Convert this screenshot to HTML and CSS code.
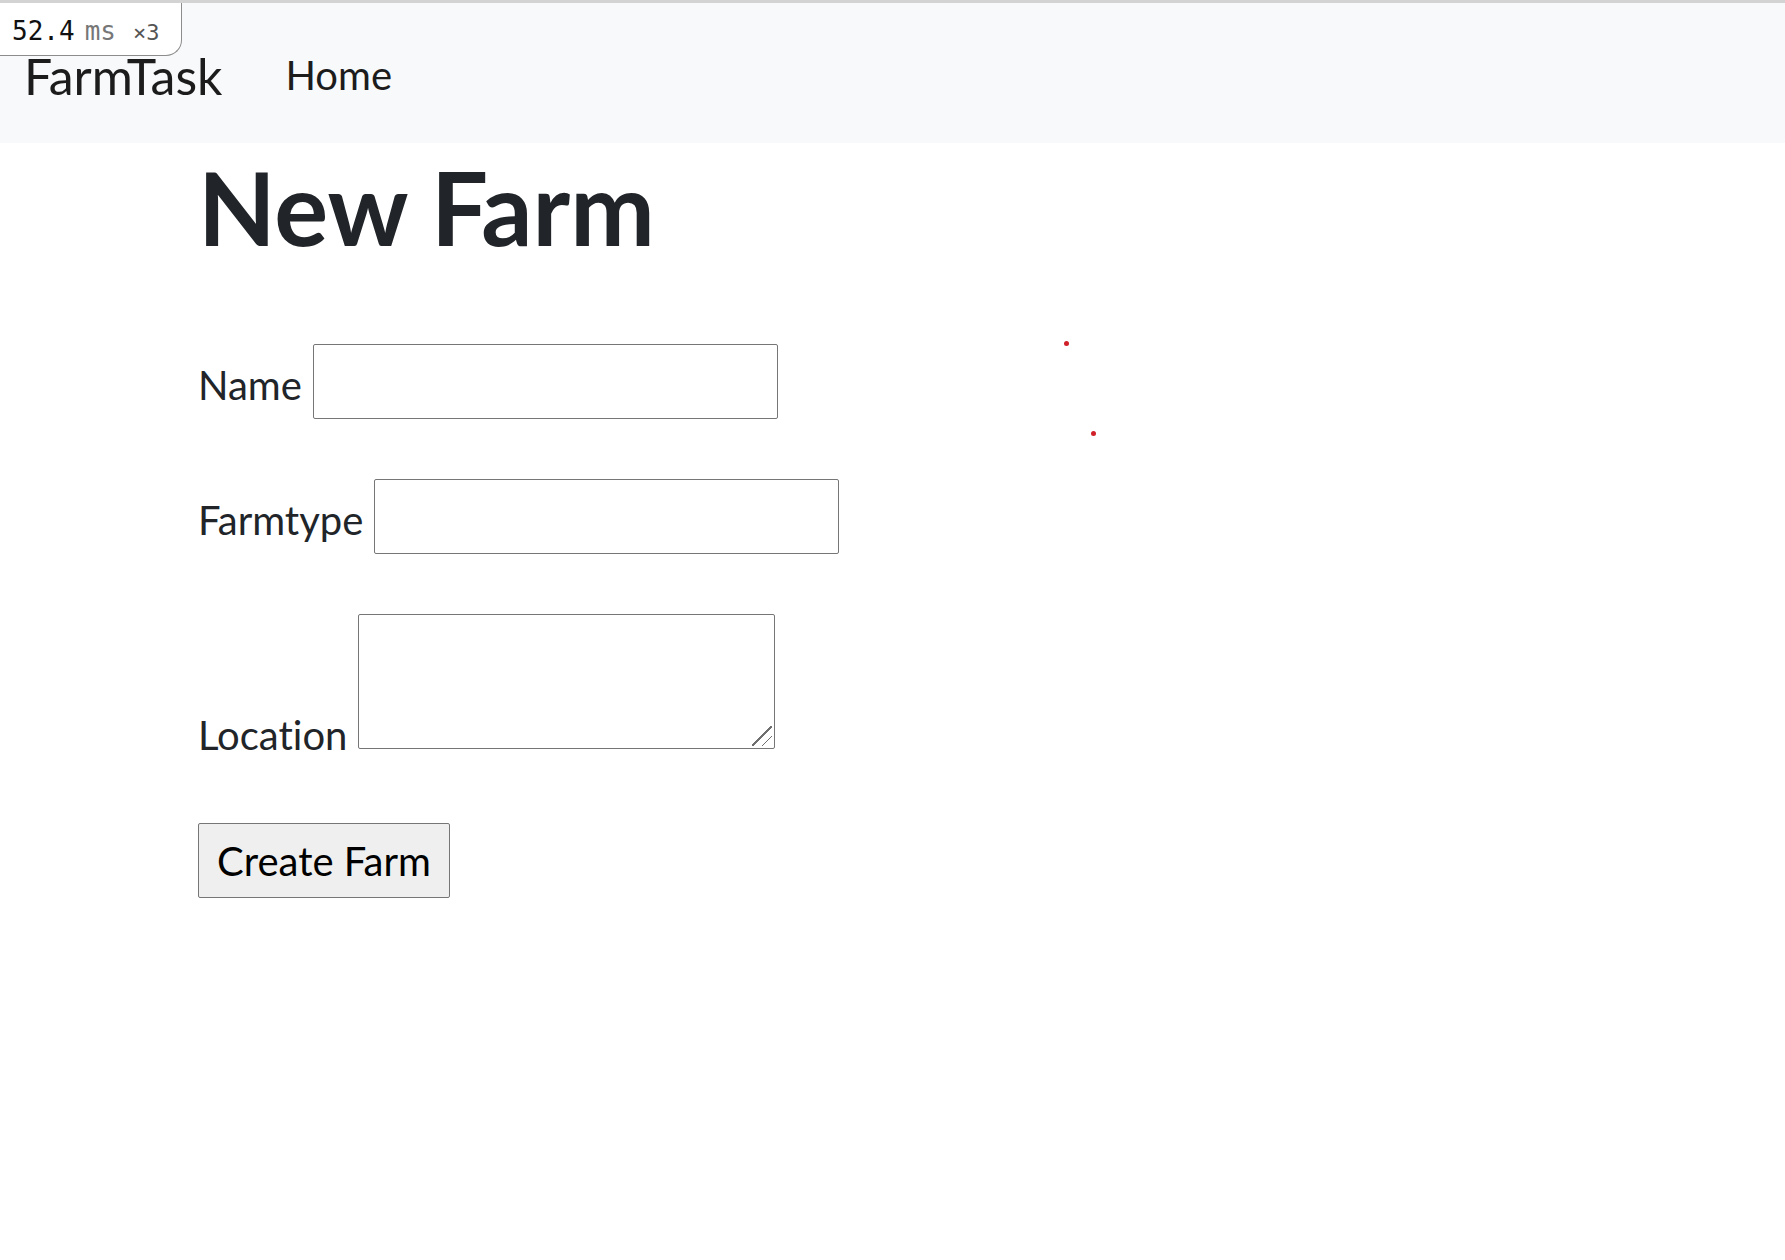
FILE: index.html
```html
<!DOCTYPE html>
<html lang="en">
<head>
<meta charset="utf-8">
<title>FarmTask</title>
<link rel="stylesheet" href="styles.css">
</head>
<body>
<div class="topline"></div>
<nav class="navbar">
  <a class="brand" href="#">FarmTask</a>
  <a class="nav-link" href="#">Home</a>
</nav>
<div class="perf"><span class="perf-num">52.4</span><span class="perf-unit">ms</span><span class="perf-count">×3</span></div>
<main class="container">
  <h1 class="title">New Farm</h1>
  <form class="farm-form">
    <div class="field field-input">
      <label class="label" for="name">Name</label>
      <input class="text-input" type="text" id="name">
    </div>
    <div class="field field-input">
      <label class="label" for="farmtype">Farmtype</label>
      <input class="text-input" type="text" id="farmtype">
    </div>
    <div class="field field-area">
      <label class="label" for="location">Location</label>
      <span class="area-wrap"><textarea class="text-area" id="location"></textarea></span>
    </div>
    <div class="actions">
      <button class="btn" type="button">Create Farm</button>
    </div>
  </form>
</main>
<span class="dot dot-a"></span>
<span class="dot dot-b"></span>
</body>
</html>
```

FILE: styles.css
```css
html, body {
  margin: 0;
  padding: 0;
  background: #ffffff;
}

body {
  font-family: "Lato", "Noto Sans", sans-serif;
  font-variant-ligatures: none;
  color: #212529;
  position: relative;
  min-height: 1260px;
}

.topline {
  height: 3px;
  background: #d3d3d3;
}

.navbar {
  height: 140px;
  background: #f8f9fa;
  display: flex;
  align-items: flex-start;
  padding-left: 24px;
  box-sizing: border-box;
}

.brand {
  font-size: 50px;
  line-height: 60px;
  margin-top: 43px;
  color: #1c1c1c;
  text-decoration: none;
}

.nav-link {
  font-size: 40px;
  line-height: 48px;
  margin-top: 48px;
  margin-left: 63px;
  color: #1c1c1c;
  text-decoration: none;
}

.perf {
  position: absolute;
  top: 3px;
  left: -1px;
  width: 183px;
  height: 53px;
  box-sizing: border-box;
  background: #ffffff;
  border: 1px solid #8c8c8c;
  border-top: none;
  border-bottom-right-radius: 16px;
  font-family: "DejaVu Sans Mono", "Liberation Mono", monospace;
  display: flex;
  align-items: baseline;
  padding: 13px 0 0 12px;
  line-height: 30px;
}

.perf-num {
  font-size: 26px;
  color: #111111;
}

.perf-unit {
  font-size: 26px;
  color: #777777;
  margin-left: 10px;
}

.perf-count {
  font-size: 22px;
  color: #555555;
  margin-left: 17px;
}

.container {
  padding-left: 198px;
}

.title {
  font-size: 101px;
  font-weight: 700;
  line-height: 120px;
  margin: 4px 0 77px;
  color: #212529;
  letter-spacing: 0;
}

.farm-form {
  display: flex;
  flex-direction: column;
  align-items: flex-start;
}

.field {
  display: flex;
  align-items: flex-end;
  gap: 11px;
  margin-bottom: 60px;
}

.label {
  font-size: 40px;
  line-height: 48px;
  color: #212529;
}

.field-input .label {
  margin-bottom: 10px;
}

.text-input {
  width: 465px;
  height: 75px;
  box-sizing: border-box;
  border: 1px solid #767676;
  border-radius: 2px;
  font-size: 33px;
  margin: 0;
  padding: 2px 5px;
  background: #ffffff;
}

.field-area {
  margin-bottom: 64px;
}

.area-wrap {
  position: relative;
  display: block;
  width: 417px;
  height: 135px;
  margin-bottom: 10px;
}

.area-wrap::after {
  content: "";
  position: absolute;
  right: 3px;
  bottom: 3px;
  width: 20px;
  height: 20px;
  pointer-events: none;
  background:
    linear-gradient(135deg, transparent 0 47%, #6f6f6f 47% 53%, transparent 53% 100%),
    linear-gradient(135deg, transparent 0 47%, #6f6f6f 47% 53%, transparent 53% 100%);
  background-size: 20px 20px, 10px 10px;
  background-position: 0 0, 10px 10px;
  background-repeat: no-repeat;
}

.text-area {
  display: block;
  width: 417px;
  height: 135px;
  box-sizing: border-box;
  border: 1px solid #767676;
  border-radius: 2px;
  margin: 0;
  font-size: 33px;
  padding: 2px;
  background: #ffffff;
  resize: none;
}

.btn {
  width: 252px;
  height: 75px;
  box-sizing: border-box;
  background: #efefef;
  border: 1px solid #767676;
  border-radius: 2px;
  font-family: "Lato", "Noto Sans", sans-serif;
  font-variant-ligatures: none;
  font-size: 40px;
  color: #000000;
  padding: 0;
  margin: 0;
}

.dot {
  position: absolute;
  width: 5px;
  height: 5px;
  border-radius: 50%;
  background: #d0202a;
}

.dot-a {
  left: 1064px;
  top: 341px;
}

.dot-b {
  left: 1091px;
  top: 431px;
}
```
